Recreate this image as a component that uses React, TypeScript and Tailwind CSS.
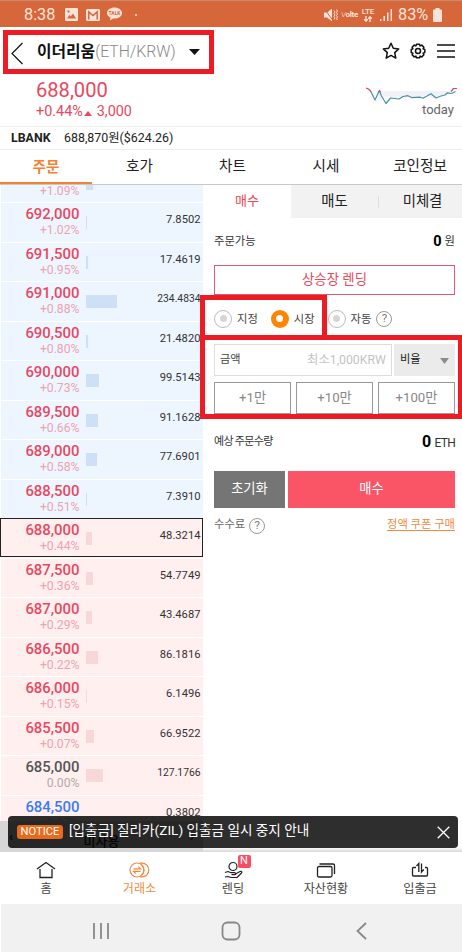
import { clsx } from 'clsx';

// the first row is scrolled half out of view, only its rate shows
const ORDERS = [
  { price: '', rate: '+1.09%', amount: '', bar: 7, side: 'ask' },
  { price: '692,000', rate: '+1.02%', amount: '7.8502', bar: 1, side: 'ask' },
  { price: '691,500', rate: '+0.95%', amount: '17.4619', bar: 2, side: 'ask' },
  { price: '691,000', rate: '+0.88%', amount: '234.4834', bar: 31, side: 'ask' },
  { price: '690,500', rate: '+0.80%', amount: '21.4820', bar: 2, side: 'ask' },
  { price: '690,000', rate: '+0.73%', amount: '99.5143', bar: 13, side: 'ask' },
  { price: '689,500', rate: '+0.66%', amount: '91.1628', bar: 12, side: 'ask' },
  { price: '689,000', rate: '+0.58%', amount: '77.6901', bar: 11, side: 'ask' },
  { price: '688,500', rate: '+0.51%', amount: '7.3910', bar: 1, side: 'ask' },
  { price: '688,000', rate: '+0.44%', amount: '48.3214', bar: 6, side: 'bid', current: true },
  { price: '687,500', rate: '+0.36%', amount: '54.7749', bar: 7, side: 'bid' },
  { price: '687,000', rate: '+0.29%', amount: '43.4687', bar: 6, side: 'bid' },
  { price: '686,500', rate: '+0.22%', amount: '86.1816', bar: 12, side: 'bid' },
  { price: '686,000', rate: '+0.15%', amount: '6.1496', bar: 1, side: 'bid' },
  { price: '685,500', rate: '+0.07%', amount: '66.9522', bar: 8, side: 'bid' },
  { price: '685,000', rate: '0.00%', amount: '127.1766', bar: 17, side: 'bid' },
  { price: '684,500', rate: '-0.07%', amount: '0.3802', bar: 0, side: 'bid' },
];

function StatusBar() {
  return (
    <div className="flex h-[27px] shrink-0 items-center border-t border-[#c98a70] bg-[#d5673b] pl-[24px] pt-[2px] text-[#fbe3d8]">
      <span className="w-[41px] text-[16.300px] leading-none">8:38</span>
      <svg width="13" height="13" viewBox="0 0 13 13" fill="currentColor" className="-mt-[2px]">
        <path fillRule="evenodd" d="M1 0h11a1 1 0 0 1 1 1v11a1 1 0 0 1-1 1H1a1 1 0 0 1-1-1V1a1 1 0 0 1 1-1zM2 10.5h9L8 5.5 5.8 8.6 4.3 7zM2.5 2.5v2h2v-2z" />
      </svg>
      <svg className="-mt-[1px] ml-[8px]" width="14" height="12" viewBox="0 0 14 12" fill="none">
        <rect width="14" height="12" rx="1.5" fill="currentColor" />
        <path d="M2.8 10.5V3L7 6.6 11.2 3v7.5" stroke="#d5673b" strokeWidth="1.5" />
      </svg>
      <div className="relative -mt-[2px] ml-[7px] flex h-[14px] w-[15px] items-start">
        <svg width="15" height="14" viewBox="0 0 15 14" fill="currentColor">
          <path d="M7.5.5C3.4.5 0 2.9 0 6c0 2 1.4 3.700 3.500 4.700L3 13.500l3-2c.5.1 1 .1 1.500.1 4.100 0 7.500-2.500 7.500-5.600S11.600.5 7.500.5z" />
        </svg>
        <span className="absolute inset-x-0 top-[3px] text-center text-[5px] font-bold leading-[6px] text-[#d5673b]">TALK</span>
      </div>
      <span className="ml-[13px] h-[2px] w-[2px] rounded-full bg-current" />
      <div className="ml-auto flex items-center pr-[20px]">
        <svg width="14" height="14" viewBox="0 0 14 14" fill="currentColor">
          <path d="M0 4.500h3L8 .8v12.400L3 9.500H0z" />
          <path d="M.5 1l8.500 11.500" stroke="#d5673b" strokeWidth="1" />
          <path d="M10 2.500l1 1.500-1 1.500 1 1.500-1 1.500 1 1.500-1 1.500M12.500 1.500l1 1.500-1 1.500 1 1.500-1 1.500 1 1.500-1 1.500 1 1.500" stroke="currentColor" strokeWidth="1" fill="none" />
        </svg>
        <span className="ml-[3px] w-[17px] whitespace-nowrap text-[8px] font-bold leading-none tracking-[-0.300px]"><i className="font-light">V</i>olte</span>
        <div className="ml-[3px] flex w-[14px] flex-col items-center">
          <span className="text-[8px] font-medium leading-[8px]">LTE</span>
          <svg width="10" height="6" viewBox="0 0 9 6" fill="none" stroke="currentColor" strokeWidth="1.300">
            <path d="M2.500 0v5M.7 3.200l1.800 2 1.800-2M6.500 6V1M4.700 2.800l1.800-2 1.800 2" />
          </svg>
        </div>
        <svg className="ml-[5px]" width="13" height="13" viewBox="0 0 13 13" fill="currentColor">
          <path d="M0 11h1.500v2H0zM3.500 8H5v5H3.500zM7 4.500h1.500V13H7zM10.500 1H12v12h-1.500z" />
        </svg>
        <span className="ml-[5px] w-[31px] text-[16.300px] leading-none">83%</span>
        <svg className="ml-[4px]" width="9" height="14" viewBox="0 0 9 14" fill="currentColor">
          <path d="M2.500 0h4v1.500H8a1 1 0 0 1 1 1V13a1 1 0 0 1-1 1H1a1 1 0 0 1-1-1V2.500a1 1 0 0 1 1-1h1.500z" />
        </svg>
      </div>
    </div>
  );
}

function Header() {
  return (
    <header className="flex h-[48px] shrink-0 items-center pl-[11px] pr-[7px] text-[#111]">
      <svg width="12" height="23" viewBox="0 0 12 23" fill="none" stroke="currentColor" strokeWidth="1.200" className="mt-[4px]">
        <path d="M11.500 1L1 11.500l10.500 10.500" />
      </svg>
      <h1 className="ml-[14px] mt-[1px] flex w-[139px] items-center whitespace-nowrap text-[15.800px] leading-none">
        <span className="font-bold">이더리움</span>
        <span className="font-light text-[#888]">(ETH/KRW)</span>
      </h1>
      <svg className="ml-[13px] mt-[1px]" width="11" height="6" viewBox="0 0 11 6">
        <path d="M0 0h11L5.500 6z" fill="currentColor" />
      </svg>
      <div className="ml-auto flex items-center">
        <svg width="18" height="18" viewBox="0 0 18 18" fill="none" stroke="currentColor" strokeWidth="1.500" strokeLinejoin="round">
          <path d="M9 1.300l2.300 5 5.400.6-4 3.700 1.100 5.500L9 13.400l-4.800 2.700 1.100-5.500-4-3.700 5.400-.6z" />
        </svg>
        <svg className="ml-[9px]" width="18" height="18" viewBox="0 0 18 18" fill="none" stroke="currentColor" strokeWidth="1.500" strokeLinejoin="round">
          <path d="M7.500 1.200h3l.6 1.700 1.700-.8 2.100 2.100-.8 1.700 1.700.6v3l-1.700.6.8 1.700-2.100 2.100-1.700-.8-.6 1.700h-3l-.6-1.700-1.700.8-2.100-2.100.8-1.700-1.700-.6v-3l1.700-.6-.8-1.700 2.100-2.100 1.700.8z" transform="translate(0 1)" />
          <circle cx="9" cy="9" r="2.500" />
        </svg>
        <svg className="ml-[10px]" width="18" height="14" viewBox="0 0 18 14" stroke="currentColor" strokeWidth="1.600">
          <path d="M0 1h18M0 7h18M0 13h18" />
        </svg>
      </div>
    </header>
  );
}

function PriceSummary() {
  return (
    <section className="flex h-[52px] shrink-0 justify-between border-b border-[#eee] pl-[36px] pr-[5px]">
      <div className="text-[#e8485c]">
        <p className="mt-[5px] text-[20.100px] leading-[21px]">688,000</p>
        <p className="mt-px flex items-center text-[14.400px] leading-[19px]">
          +0.44%
          <svg className="ml-[1px] mr-[5px] mt-[4px]" width="8" height="5" viewBox="0 0 8 5"><path d="M4 0l4 5H0z" fill="currentColor" /></svg>
          3,000
        </p>
      </div>
      <div className="flex flex-col items-end">
        <svg className="mt-[12px]" width="91" height="18" viewBox="0 0 91 18" fill="none" strokeWidth="1.200" strokeLinejoin="round">
          <path d="M4.500 4H86l-5 3.500-7 1-8 3-5-4-7 4-17-2-8 1.500-10-2-5 6-5-11.500h-2L9 12z" fill="#f0f2f5" />
          <path d="M4.500 4L9 13l3.500-7.500 1-1.500 2 5 4.500 7.500 4.500-5.500 8.500 1 4-2.500 5-.8 4 2 8-.5 3 1 8-4.500 5 4.300 5-2 4-1 2.500-2.200 4 .7 4-2" stroke="#4a8fb0" />
          <path d="M0 1l2.500 1L5 4.500M12.500 5l1-1.500 1 1.500M85 4.500L87.500 1.500H91" stroke="#e2474f" />
        </svg>
        <span className="mr-[3px] text-[13px] leading-[10px] text-[#666]">today</span>
      </div>
    </section>
  );
}

function MainTabs() {
  return (
    <nav className="flex h-[35px] shrink-0 border-b border-[#c8c8c8] text-[14.600px] text-[#222]">
      <div className="flex w-[92px] items-center justify-center border-b-2 border-[#f58232] pt-[3px] font-bold text-[#f58232]">주문</div>
      <div className="flex w-[94px] items-center justify-center pl-[1px]">호가</div>
      <div className="flex w-[93px] items-center justify-center">차트</div>
      <div className="flex w-[94px] items-center justify-center">시세</div>
      <div className="flex w-[89px] items-center justify-center pl-[5px]">코인정보</div>
    </nav>
  );
}

function OrderBook() {
  return (
    <section className="flex w-[203px] shrink-0 flex-col overflow-hidden">
      <div className="h-[636px] shrink-0 overflow-hidden">
        <div className="-mt-[22.500px]">
          {ORDERS.map((o) => (
            <div
              key={o.rate}
              className={clsx(
                'relative ml-[1px] flex h-[39.530px] border-t border-white',
                o.side === 'ask' ? 'bg-[#edf6ff]' : 'bg-[#ffefef]',
              )}
            >
              {o.current && <div className="absolute -left-[1px] -top-px bottom-[1px] right-0 border border-[#222]" />}
              <div className="w-[78.500px] pt-[3px] text-right">
                <p
                  className={clsx(
                    'h-[17px] text-[14.900px] font-medium leading-[17px]',
                    o.price === '685,000' ? 'text-[#555]' : o.price === '684,500' ? 'text-[#3a7df0]' : 'text-[#e8485f]',
                  )}
                >
                  {o.price}
                </p>
                <p
                  className={clsx(
                    'text-[12.200px] leading-[15px]',
                    o.price === '685,000' ? 'text-[#b3aaaa]' : o.price === '684,500' ? 'text-[#a9c3ee]' : 'text-[#eea3b0]',
                  )}
                >
                  {o.rate}
                </p>
              </div>
              <div
                className={clsx('ml-[6px] mt-[13px] h-[13px]', o.side === 'ask' ? 'bg-[#cde0f5]' : 'bg-[#f7d7d7]')}
                style={{ width: o.bar }}
              />
              <p className={clsx('ml-auto pr-[2.500px] pt-[10px] leading-[14px] text-[#333]', o.amount.length > 7 ? 'text-[10.300px]' : 'text-[11.200px]')}>
                {o.amount}
              </p>
            </div>
          ))}
        </div>
      </div>
      <div className="flex flex-1 items-center justify-between bg-[#d6d6d6] px-[9px] text-[13px] font-medium text-[#111]">
        <span>‹</span>
        <span className="pt-[10px]">미사용</span>
        <span>›</span>
      </div>
    </section>
  );
}

function Radio({ label, checked }: { label: string; checked?: boolean }) {
  return (
    <div className="flex items-center text-[11.300px] text-[#444]">
      <span
        className={clsx(
          'mr-[5px] flex h-[18px] w-[18px] items-center justify-center rounded-full',
          checked ? 'bg-[#ff8400]' : 'border border-[#bbb] bg-white',
        )}
      >
        <span className={clsx('h-[7px] w-[7px] rounded-full', checked ? 'bg-white' : 'bg-[#d6d6d6]')} />
      </span>
      <span className="pt-[2px] leading-none">{label}</span>
    </div>
  );
}

function Help() {
  return (
    <span className="flex h-[16px] w-[16px] items-center justify-center rounded-full border border-[#999] text-[11.500px] leading-none text-[#777]">?</span>
  );
}

function OrderForm() {
  return (
    <section className="flex-1">
      <div className="flex h-[33px] text-[14.400px] text-[#222]">
        <div className="flex w-[88px] items-center justify-center pb-[1px] text-[13px] text-[#e8485c]">매수</div>
        <div className="flex w-[87px] items-center justify-center bg-[#f2f2f2]">매도</div>
        <div className="flex flex-1 items-center bg-[#f2f2f2]">
          <span className="h-[12px] w-px bg-[#ddd]" />
          <span className="flex-1 pl-[4px] text-center">미체결</span>
        </div>
      </div>
      <div className="pl-[11px] pr-[7px]">
        <div className="flex h-[47px] items-center justify-between pt-[1px] text-[11.300px] text-[#333]">
          <span>주문가능</span>
          <span className="flex items-center gap-[3px]">
            <b className="text-[14.500px] text-black">0</b>원
          </span>
        </div>
        <button className="flex h-[30px] w-full items-center justify-center border border-[#e0596c] text-[13.400px] text-[#e8485c]">상승장 렌딩</button>
        <div className="mt-[14px] flex h-[19px] items-center">
          <Radio label="지정" />
          <div className="ml-[13px]"><Radio label="시장" checked /></div>
          <div className="ml-[13px] mr-[5px]"><Radio label="자동" /></div>
          <Help />
        </div>
        <div className="mt-[16px] flex h-[32px] justify-between text-[11.200px]">
          <div className="flex w-[178px] items-center justify-between border border-[#ddd] px-[5px] text-[#444]">
            <span>금액</span>
            <span className="text-[12.300px] text-[#c4c4c4]">최소1,000KRW</span>
          </div>
          <div className="flex w-[61px] items-center justify-between bg-[#ebebeb] px-[6px] text-[#222]">
            비율
            <svg className="mt-[2px]" width="9" height="6" viewBox="0 0 9 6"><path d="M0 0h9L4.500 6z" fill="#8c8c8c" /></svg>
          </div>
        </div>
        <div className="mt-[6px] grid h-[32px] grid-cols-3 gap-[5px] text-[13.200px] text-[#888]">
          {['+1만', '+10만', '+100만'].map((v) => (
            <button key={v} className="flex items-center justify-center border border-[#999]">{v}</button>
          ))}
        </div>
        <div className="mt-[18px] flex h-[20px] items-center justify-between text-[11px] tracking-[-0.700px] text-[#333]">
          <span>예상 주문수량</span>
          <span className="flex items-center gap-[4px]">
            <b className="text-[16px] text-black">0</b>
            <span className="pt-[1px] text-[12px]">ETH</span>
          </span>
        </div>
        <div className="mt-[19px] flex h-[37px] gap-[3px] text-[13.300px] text-white">
          <button className="w-[71px] bg-[#757575] pb-[2px]">초기화</button>
          <button className="flex-1 bg-[#f95567] pb-[2px]">매수</button>
        </div>
        <div className="mt-[9px] flex h-[17px] items-center justify-between text-[11.300px] text-[#666]">
          <span className="flex items-center gap-[4px]">수수료 <Help /></span>
          <span className="text-[11.300px] text-[#f08a42] underline underline-offset-2">정액 쿠폰 구매</span>
        </div>
      </div>
    </section>
  );
}

function Notice() {
  return (
    <div className="absolute bottom-[4px] left-[8px] right-[4px] flex h-[32px] items-center rounded-[4px] bg-black/82 pl-[9px] pr-[8px]">
      <span className="flex h-[14px] w-[46px] items-center justify-center rounded-[3px] bg-[#ea6a1c] text-[11.200px] text-white">NOTICE</span>
      <span className="-mt-[2px] ml-[6px] whitespace-nowrap text-[13.600px] leading-none text-white">[입출금] 질리카(ZIL) 입출금 일시 중지 안내</span>
      <svg className="ml-auto" width="13" height="13" viewBox="0 0 13 13" stroke="#fff" strokeWidth="1.300">
        <path d="M.7.7l11.600 11.600M12.300.7L.7 12.300" />
      </svg>
    </div>
  );
}

function BottomNav() {
  return (
    <nav className="flex h-[52px] shrink-0 bg-white text-[12.100px] text-[#444]">
      <div className="flex w-[92px] flex-col items-center pt-[9px]">
        <svg width="20" height="18" viewBox="0 0 20 18" fill="none" stroke="#222" strokeWidth="1.300">
          <path d="M1 8l9-6.500L19 8M4 8v8.500h12V8" />
        </svg>
        <span className="pt-[1px] leading-[18px]">홈</span>
      </div>
      <div className="flex w-[95px] flex-col items-center pt-[9px] text-[#f08a42]">
        <svg width="21" height="18" viewBox="0 0 21 18" fill="none" stroke="currentColor" strokeWidth="1.200">
          <circle cx="8" cy="9" r="7" />
          <path d="M11 2.200h2a6.800 6.800 0 0 1 0 13.600h-2M12.500 4a6.500 6.500 0 0 1 0 10M4.500 7.800h7L9.300 5.600M11.500 10.300h-7l2.200 2.200" />
        </svg>
        <span className="pt-[1px] leading-[18px]">거래소</span>
      </div>
      <div className="flex w-[92px] flex-col items-center pt-[9px]">
        <div className="relative">
          <svg width="21" height="18" viewBox="0 0 21 18" fill="none" stroke="#222" strokeWidth="1.200" strokeLinejoin="round">
            <circle cx="10" cy="5.500" r="4" />
            <path d="M2 11.500l3-1 3 1.200h3.500c1.500 0 1.500 2 0 2H8.500M12.500 13l4.500-2.500c1.500-.5 2.500.5 1.500 1.500L14 16.500H8l-3-1-3 .5" />
          </svg>
          <span className="absolute -top-[6px] left-[15px] flex h-[13px] w-[13px] items-center justify-center rounded-[2px] bg-[#f94d63] text-[11px] text-white">N</span>
        </div>
        <span className="pt-[1px] leading-[18px]">렌딩</span>
      </div>
      <div className="flex w-[94px] flex-col items-center pt-[9px]">
        <svg width="20" height="18" viewBox="0 0 20 18" fill="none" stroke="#222" strokeWidth="1.300">
          <rect x="1.500" y="5.500" width="14.500" height="10.500" rx="1.500" />
          <path d="M3.500 3H17a1.500 1.500 0 0 1 1.500 1.500V13" />
        </svg>
        <span className="pt-[1px] leading-[18px]">자산현황</span>
      </div>
      <div className="flex w-[89px] flex-col items-center pl-[5px] pt-[9px]">
        <svg width="18" height="18" viewBox="0 0 18 18" fill="none" stroke="#222" strokeWidth="1.300">
          <path d="M5 6.500H2.500a1 1 0 0 0-1 1V14a1 1 0 0 0 1 1h13a1 1 0 0 0 1-1V7.500a1 1 0 0 0-1-1H14M7.800 11V2.500L5.500 5M10.500 2.500V11L12.800 8.500" />
        </svg>
        <span className="pt-[1px] leading-[18px]">입출금</span>
      </div>
    </nav>
  );
}

function SystemBar() {
  return (
    <div className="ml-[1px] flex h-[48px] shrink-0 items-center bg-[#f1f1f1] pl-[91px] pt-[6px] text-[#888]">
      <svg width="18" height="18" viewBox="0 0 18 18" stroke="currentColor" strokeWidth="1.800"><path d="M2 1v16M9 1v16M16 1v16" /></svg>
      <svg className="ml-[111px]" width="20" height="20" viewBox="0 0 20 20" fill="none" stroke="currentColor" strokeWidth="1.800"><rect x="1.500" y="1.500" width="17" height="17" rx="5" /></svg>
      <svg className="ml-[115px]" width="11" height="18" viewBox="0 0 11 18" fill="none" stroke="currentColor" strokeWidth="1.800"><path d="M10 1L1.500 9l8.500 8" /></svg>
    </div>
  );
}

export default function App() {
  return (
    <main className="relative flex h-[952px] w-[462px] flex-col overflow-hidden bg-white font-[Roboto,'Noto_Sans_CJK_KR',sans-serif]">
      <StatusBar />
      <Header />
      <PriceSummary />
      <div className="flex h-[23px] shrink-0 items-center border-b border-[#eee] pl-[11px] text-[12.400px] text-[#222]">
        <b className="w-[53px]">LBANK</b>
        <span>688,870원($624.26)</span>
      </div>
      <MainTabs />
      <div className="relative flex h-[667px] shrink-0">
        <OrderBook />
        <OrderForm />
        <div className="absolute inset-x-0 bottom-0 h-[5px] bg-gradient-to-b from-transparent to-[#d8d8d8]" />
        <Notice />
      </div>
      <BottomNav />
      <SystemBar />

      {/* highlight frames */}
      <div className="absolute left-[3px] top-[30px] h-[44px] w-[211px] border-[5px] border-[#ed1c24]" />
      <div className="absolute left-[200px] top-[295px] h-[45px] w-[127px] border-[5px] border-[#ed1c24]" />
      <div className="absolute left-[200px] top-[335px] h-[84px] w-[263px] border-[5px] border-[#ed1c24]" />
    </main>
  );
}
